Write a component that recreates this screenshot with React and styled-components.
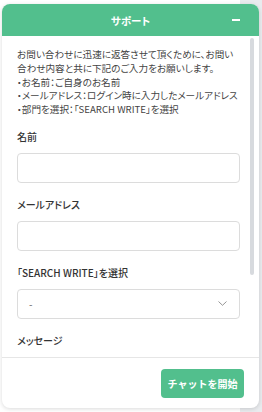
import styled, { createGlobalStyle } from 'styled-components';

const GlobalStyle = createGlobalStyle`
  html, body {
    margin: 0;
    padding: 0;
  }
  body {
    background: linear-gradient(90deg, #ffffff 240px, #e9ebee 240px);
    font-family: "Noto Sans CJK JP", "Noto Sans", sans-serif;
    font-feature-settings: "palt";
    color: #333;
  }
`;

const Page = styled.div`
  padding: 4px 3px 4px 2px;
  height: 412px;
  box-sizing: border-box;
`;

const Widget = styled.div`
  height: 404px;
  display: flex;
  flex-direction: column;
  background: #fff;
  border-radius: 8px;
  box-shadow: 0 1px 4px rgba(0, 0, 0, 0.15);
  overflow: hidden;
`;

const Header = styled.div`
  height: 32px;
  flex-shrink: 0;
  background: #52bf8d;
  color: #fff;
  display: flex;
  align-items: center;
  justify-content: center;
  position: relative;
  font-size: 10.5px;
  font-weight: 700;
`;

const Minimize = styled.span`
  position: absolute;
  right: 19px;
  top: 15px;
  width: 8px;
  height: 2px;
  background: #fff;
`;

const Body = styled.div`
  flex: 1;
  position: relative;
  overflow: hidden;
`;

const Scroll = styled.div`
  height: 100%;
  overflow: hidden;
  padding: 12px 19px 15px 15px;
  box-sizing: border-box;
`;

const ScrollThumb = styled.div`
  position: absolute;
  top: 2px;
  right: 5px;
  width: 4px;
  height: 237px;
  border-radius: 2px;
  background: #d7dade;
`;

const Intro = styled.p`
  margin: 0 0 13px;
  font-size: 9.6px;
  line-height: 13.75px;
  color: #444;
  white-space: nowrap;
`;

const Field = styled.div`
  display: flex;
  flex-direction: column;
  margin-bottom: 15px;
`;

const Label = styled.label`
  font-size: 10px;
  font-weight: 500;
  color: #333;
  line-height: 13px;
  margin-bottom: 10px;
`;

const Input = styled.input`
  height: 30px;
  box-sizing: border-box;
  border: 1px solid #dcdcdc;
  border-radius: 4px;
  outline: none;
  padding: 0 10px;
  font: inherit;
`;

const SelectBox = styled.div`
  height: 30px;
  box-sizing: border-box;
  border: 1px solid #dcdcdc;
  border-radius: 4px;
  display: flex;
  align-items: center;
  justify-content: space-between;
  padding: 0 12px 0 11px;
  font-size: 10px;
  color: #666;
`;

const TextArea = styled.textarea`
  height: 80px;
  box-sizing: border-box;
  border: 1px solid #dcdcdc;
  border-radius: 4px;
  resize: none;
  outline: none;
`;

const Footer = styled.div`
  flex-shrink: 0;
  height: 51px;
  box-sizing: border-box;
  border-top: 1px solid #e6e6e6;
  display: flex;
  justify-content: flex-end;
  padding: 11px 15px 10px;
`;

const StartButton = styled.button`
  width: 83px;
  height: 29px;
  border: none;
  border-radius: 4px;
  background: #52bf8d;
  color: #fff;
  font-family: inherit;
  font-size: 10px;
  font-weight: 700;
`;

function Chevron() {
  return (
    <svg width="9" height="5" viewBox="0 0 9 5" fill="none">
      <path d="M0.5 0.5 L4.5 4.3 L8.5 0.5" stroke="#8a8a8a" strokeWidth="0.9" />
    </svg>
  );
}

export default function App() {
  return (
    <Page>
      <GlobalStyle />
      <Widget>
        <Header>
          サポート
          <Minimize />
        </Header>
        <Body>
          <Scroll>
            <Intro>
              お問い合わせに迅速に返答させて頂くために、お問い<br />
              合わせ内容と共に下記のご入力をお願いします。<br />
              ・お名前：ご自身のお名前<br />
              ・メールアドレス：ログイン時に入力したメールアドレス<br />
              ・部門を選択：「SEARCH WRITE」を選択
            </Intro>
            <Field>
              <Label>名前</Label>
              <Input />
            </Field>
            <Field>
              <Label>メールアドレス</Label>
              <Input />
            </Field>
            <Field>
              <Label>「SEARCH WRITE」を選択</Label>
              <SelectBox>
                <span>-</span>
                <Chevron />
              </SelectBox>
            </Field>
            <Field>
              <Label>メッセージ</Label>
              <TextArea />
            </Field>
          </Scroll>
          <ScrollThumb />
        </Body>
        <Footer>
          <StartButton>チャットを開始</StartButton>
        </Footer>
      </Widget>
    </Page>
  );
}
